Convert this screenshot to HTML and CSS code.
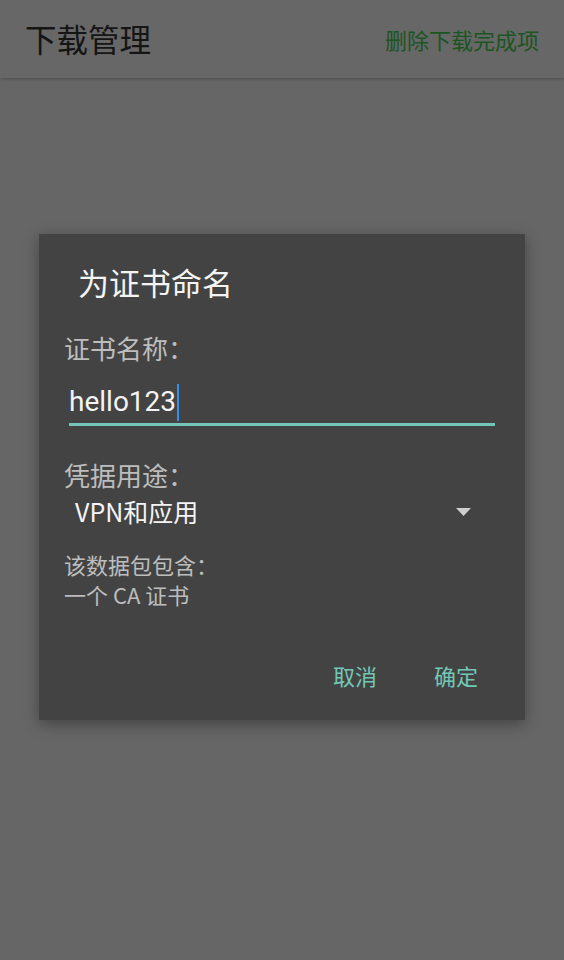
FILE: index.html
```html
<!DOCTYPE html>
<html lang="zh-CN">
<head>
<meta charset="utf-8">
<title>下载管理</title>
<link rel="stylesheet" href="styles.css">
</head>
<body>
<header class="appbar">
  <div class="appbar-title">下载管理</div>
  <div class="appbar-action">删除下载完成项</div>
</header>
<div class="scrim">
  <div class="dialog">
    <div class="dialog-title">为证书命名</div>
    <div class="label">证书名称：</div>
    <div class="input"><span class="value">hello123</span><span class="cursor"></span></div>
    <div class="label label2">凭据用途：</div>
    <div class="spinner">
      <span>VPN和应用</span>
      <svg class="arrow" width="15" height="8" viewBox="0 0 15 8"><path d="M0 0H15L7.5 8Z" fill="#cfcfcf"/></svg>
    </div>
    <div class="desc">
      <div>该数据包包含：</div>
      <div>一个 CA 证书</div>
    </div>
    <div class="buttons">
      <span class="btn">取消</span>
      <span class="btn">确定</span>
    </div>
  </div>
</div>
</body>
</html>
```
FILE: styles.css
```css
html, body {
  margin: 0;
  padding: 0;
}
body {
  width: 564px;
  height: 960px;
  background: #666666;
  font-family: "Noto Sans CJK SC", "Noto Sans", Roboto, sans-serif;
  overflow: hidden;
  position: relative;
}
.appbar {
  height: 78px;
  background: #676767;
  display: flex;
  align-items: center;
  justify-content: space-between;
  padding: 0 25px;
  box-shadow: 0 1px 3px rgba(0,0,0,0.25);
}
.appbar-title {
  font-size: 31.5px;
  color: #151515;
  line-height: 40px;
  margin-top: -2px;
}
.appbar-action {
  font-size: 22px;
  color: #1a5522;
  line-height: 30px;
}
.scrim {
  padding: 156px 39px 0;
}
.dialog {
  width: 486px;
  height: 486px;
  box-sizing: border-box;
  background: #434343;
  box-shadow: 0 4px 14px rgba(0,0,0,0.35);
  padding: 28px 30px 25px 25px;
  display: flex;
  flex-direction: column;
}
.dialog-title {
  font-size: 31px;
  line-height: 40px;
  color: #f4f4f4;
  padding-left: 14px;
}
.label {
  font-size: 26px;
  line-height: 40px;
  color: #bdbdbd;
  margin-top: 26px;
}
.label2 {
  margin-top: 29px;
}
.input {
  margin-top: 14px;
  margin-left: 5px;
  height: 40px;
  padding-bottom: 1px;
  border-bottom: 3px solid #74c7b8;
  display: flex;
  align-items: center;
}
.value {
  font-family: Roboto, "Noto Sans", sans-serif;
  font-size: 28px;
  color: #f4f4f4;
  line-height: 40px;
}
.cursor {
  width: 2px;
  height: 37px;
  background: #2f8fea;
  margin-left: 1px;
  align-self: flex-end;
  margin-bottom: 1px;
}
.spinner {
  height: 36px;
  margin-top: -2px;
  display: flex;
  align-items: center;
  justify-content: space-between;
  padding-left: 11px;
  padding-right: 24px;
  font-size: 25px;
  color: #f4f4f4;
}
.spinner span {
  line-height: 36px;
}
.arrow {
  display: block;
  margin-top: 2px;
}
.desc {
  margin-top: 20px;
  font-size: 22px;
  line-height: 30px;
  color: #bdbdbd;
}
.buttons {
  margin-top: auto;
  display: flex;
  justify-content: flex-end;
  gap: 57px;
  padding-right: 17px;
}
.btn {
  font-size: 22px;
  line-height: 40px;
  color: #72c8b6;
}
```
